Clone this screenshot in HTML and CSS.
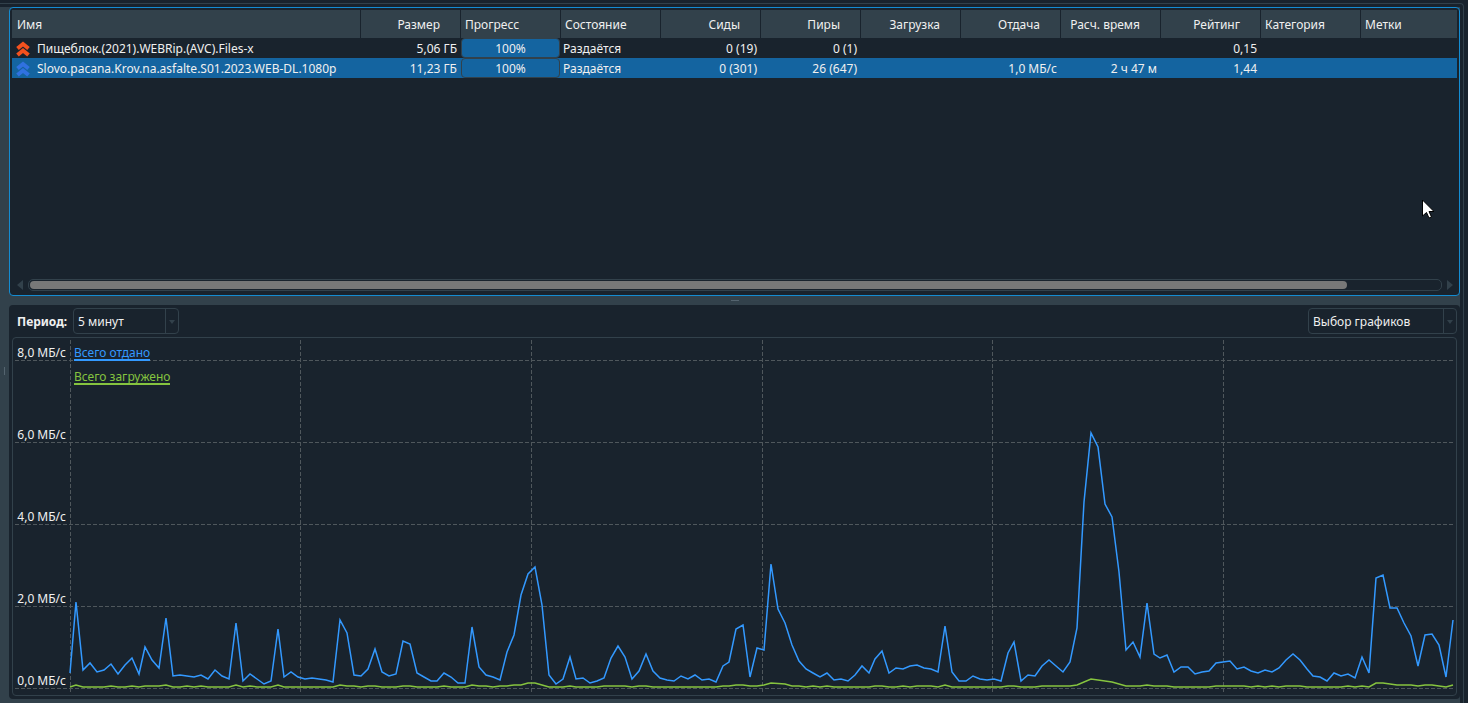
FILE: index.html
```html
<!DOCTYPE html>
<html lang="ru">
<head>
    <meta charset="UTF-8">
    <meta name="viewport" content="width=device-width, initial-scale=1.0">
    <title>Торренты</title>
    <link rel="stylesheet" href="styles.css">
</head>
<body>
    <div class="window">
        <div class="side-handle"></div>
        <div class="main">
            <section class="torrents">
                <table>
                    <colgroup>
                        <col class="col-name">
                        <col class="col" span="10">
                        <col>
                    </colgroup>
                    <thead>
                        <tr>
                            <th>Имя</th>
                            <th class="num">Размер</th>
                            <th>Прогресс</th>
                            <th>Состояние</th>
                            <th class="num">Сиды</th>
                            <th class="num">Пиры</th>
                            <th class="num">Загрузка</th>
                            <th class="num">Отдача</th>
                            <th class="num">Расч. время</th>
                            <th class="num">Рейтинг</th>
                            <th>Категория</th>
                            <th>Метки</th>
                        </tr>
                    </thead>
                    <tbody>
                        <tr>
                            <td>
                                <div class="name">
                                    <svg class="icon icon-orange" viewBox="0 0 14 14"><path d="M1.500 6.500 7 2l5.500 4.500M1.500 13 7 8.500l5.500 4.500"/></svg>
                                    <span>Пищеблок.(2021).WEBRip.(AVC).Files-x</span>
                                </div>
                            </td>
                            <td class="num">5,06 ГБ</td>
                            <td class="progress"><div class="bar">100%</div></td>
                            <td>Раздаётся</td>
                            <td class="num">0 (19)</td>
                            <td class="num">0 (1)</td>
                            <td class="num"></td>
                            <td class="num"></td>
                            <td class="num"></td>
                            <td class="num">0,15</td>
                            <td></td>
                            <td></td>
                        </tr>
                        <tr class="selected">
                            <td>
                                <div class="name">
                                    <svg class="icon icon-blue" viewBox="0 0 14 14"><path d="M1.500 6.500 7 2l5.500 4.500M1.500 13 7 8.500l5.500 4.500"/></svg>
                                    <span>Slovo.pacana.Krov.na.asfalte.S01.2023.WEB-DL.1080p</span>
                                </div>
                            </td>
                            <td class="num">11,23 ГБ</td>
                            <td class="progress"><div class="bar">100%</div></td>
                            <td>Раздаётся</td>
                            <td class="num">0 (301)</td>
                            <td class="num">26 (647)</td>
                            <td class="num"></td>
                            <td class="num">1,0 МБ/с</td>
                            <td class="num">2 ч 47 м</td>
                            <td class="num">1,44</td>
                            <td></td>
                            <td></td>
                        </tr>
                    </tbody>
                </table>
                <div class="scrollbar">
                    <svg class="arrow" viewBox="0 0 6 10"><path d="M6 0v10L0 5z"/></svg>
                    <div class="track"><div class="thumb"></div></div>
                    <svg class="arrow" viewBox="0 0 6 10"><path d="M0 0v10l6-5z"/></svg>
                </div>
            </section>

            <div class="splitter"></div>

            <section class="speed">
                <div class="toolbar">
                    <label for="period">Период:</label>
                    <span class="combo combo-period">
                        <select id="period">
                            <option>5 минут</option>
                        </select>
                    </span>
                    <span class="combo combo-graphs">
                        <select id="graphs" aria-label="Выбор графиков">
                            <option>Выбор графиков</option>
                        </select>
                    </span>
                </div>
                <div class="chart">
                    <svg class="plot" viewBox="13 338 1443 357" preserveAspectRatio="none">
                        <g class="grid">
                            <path d="M15 360.500H1453M15 442.500H1453M15 524.500H1453M15 606.500H1453M15 688.500H1453"/>
                            <path d="M70.500 340V692M300.500 340V692M531.500 340V692M762.500 340V692M992.500 340V692M1223.500 340V692"/>
                        </g>
                        <polyline class="line upload" points="70,673 76,602 83,670 90,663 97,672 104,670 111,664 118,674 125,665 132,658 139,674 145,647 152,660 159,668 166,618 173,676 180,675 187,676 194,677 201,675 208,679 215,670 222,676 229,679 236,623 243,681 250,674 257,679 264,684 271,681 278,629 284,677 291,672 298,677 305,679 312,678 319,679 326,680 333,682 340,620 347,633 354,675 361,676 368,669 375,649 382,672 389,676 396,674 403,641 410,644 417,673 424,677 431,681 437,681 444,673 451,677 458,683 465,683 472,627 479,667 486,675 493,677 500,680 507,652 514,635 521,595 528,574 535,567 542,605 549,675 556,684 563,679 570,657 576,679 583,678 590,683 597,681 604,678 611,658 618,646 625,657 632,679 639,671 646,654 653,671 660,678 667,680 674,681 681,676 688,679 695,675 702,680 709,679 716,682 723,666 729,662 736,629 743,625 750,677 757,648 764,650 771,564 778,609 785,623 792,645 799,661 806,669 813,673 820,677 827,673 834,680 841,679 848,681 855,675 862,666 869,673 875,659 882,651 889,673 896,668 903,669 910,666 917,665 924,668 931,669 938,672 945,626 952,672 959,681 966,681 973,676 980,679 987,680 994,679 1001,681 1008,653 1014,642 1021,681 1028,675 1035,676 1042,666 1049,660 1056,666 1063,672 1070,662 1077,628 1084,502 1091,433 1098,447 1105,504 1112,517 1119,572 1126,650 1133,642 1140,657 1147,603 1154,654 1160,658 1167,655 1174,672 1181,667 1188,667 1195,674 1202,672 1209,671 1216,663 1223,662 1230,661 1237,669 1244,667 1251,671 1258,673 1265,670 1272,672 1279,668 1286,660 1293,654 1300,660 1307,669 1313,676 1320,677 1327,681 1334,673 1341,676 1348,674 1355,678 1362,657 1369,673 1376,578 1383,575 1390,608 1397,608 1404,623 1411,636 1418,666 1425,635 1432,634 1439,645 1446,677 1453,620"/>
                        <polyline class="line download" points="70,687 76,685 83,687 104,687 111,686 118,687 125,687 132,686 139,687 145,686 159,686 166,685 173,687 180,687 187,686 194,687 201,686 208,687 229,687 236,685 243,687 250,686 257,687 271,687 278,685 284,687 333,687 340,685 347,686 354,686 361,687 368,686 375,686 382,687 396,687 403,686 410,686 417,687 437,687 444,686 451,687 465,687 472,685 479,686 486,686 493,687 500,686 507,686 514,685 521,685 528,683 535,683 542,685 549,687 563,687 570,686 576,687 597,687 604,686 625,686 632,687 639,686 646,686 653,687 716,687 723,686 729,686 736,685 743,685 750,686 757,686 764,685 771,683 785,684 792,686 799,686 806,687 813,686 820,687 827,686 834,687 869,687 875,686 882,686 889,687 896,687 903,686 910,687 917,686 931,686 938,687 945,685 952,687 1001,687 1008,686 1014,686 1021,687 1035,687 1042,686 1070,686 1077,685 1091,679 1112,682 1126,686 1140,686 1147,685 1154,686 1167,686 1174,687 1209,687 1216,686 1244,686 1251,687 1258,686 1265,687 1272,686 1279,687 1286,686 1300,686 1307,687 1341,687 1348,686 1355,687 1362,686 1369,687 1376,683 1383,683 1397,685 1411,685 1418,686 1425,685 1432,685 1446,687 1453,685"/>
                    </svg>
                    <div class="scale">
                        <span>8,0 МБ/с</span>
                        <span>6,0 МБ/с</span>
                        <span>4,0 МБ/с</span>
                        <span>2,0 МБ/с</span>
                        <span>0,0 МБ/с</span>
                    </div>
                    <div class="legend">
                        <span class="key-upload">Всего отдано</span>
                        <span class="key-download">Всего загружено</span>
                    </div>
                </div>
            </section>
        </div>
    </div>
    <svg class="cursor" viewBox="0 0 12 20"><path d="M.5 1v16l4-3.500 2.500 5.500 2.500-1-2.500-5.500h5z"/></svg>
</body>
</html>
```

FILE: styles.css
```css
* {
    box-sizing: border-box;
}
body {
    display: flex;
    margin: 0;
    min-height: 100vh;
    background: #19232d;
    color: #f0f0f0;
    font-family: "Noto Sans", "Open Sans", sans-serif;
    font-size: 12px;
    line-height: 16px;
}
.window {
    flex: 1;
    display: flex;
    min-width: 0;
    margin: 3px 4px 0 0;
    padding: 3px 3px 0 0;
    border-top: 1px solid #32414b;
    border-right: 1px solid #32414b;
    border-top-right-radius: 4px;
}
.side-handle {
    display: flex;
    align-items: center;
    width: 9px;
    background: #32414b;
}
.side-handle::after {
    content: "";
    width: 1px;
    height: 8px;
    margin: 32px 0 0 4px;
    background: #54646f;
}
.main {
    flex: 1;
    display: flex;
    flex-direction: column;
    min-width: 0;
    padding-bottom: 4px;
    background: #32414b;
}

/* Список торрентов */
.torrents {
    display: flex;
    flex-direction: column;
    justify-content: space-between;
    height: 289px;
    padding: 2px;
    background: #19232d;
    border: 1px solid #148cd2;
    border-radius: 4px;
}
table {
    width: 100%;
    table-layout: fixed;
    border-collapse: separate;
    border-spacing: 0;
}
.col-name {
    width: 349px;
}
.col {
    width: 100px;
}
th {
    height: 28px;
    padding: 2px 4px 0;
    background: #32414b;
    border-right: 1px solid #19232d;
    font-weight: normal;
    text-align: left;
    white-space: nowrap;
}
th:first-child {
    padding-left: 5px;
}
th:last-child {
    border-right: 0;
}
th.num {
    padding-right: 20px;
}
td {
    height: 20px;
    padding: 2px 4px 0 2px;
    white-space: nowrap;
}
.num {
    text-align: right;
}
.selected {
    background: #1464a0;
}
.name {
    display: flex;
    align-items: center;
    gap: 7px;
    padding-left: 2px;
}
.icon {
    width: 14px;
    height: 14px;
    overflow: visible;
    fill: none;
    stroke-width: 4;
}
.icon-orange {
    stroke: #f4511e;
}
.icon-blue {
    stroke: #3071e0;
}
td.progress {
    padding: 0 1px 0 0;
}
.bar {
    height: 20px;
    padding-top: 1px;
    background: #1464a0;
    border: 1px solid #32414b;
    border-radius: 4px;
    line-height: 18px;
    text-align: center;
}
.scrollbar {
    display: flex;
    align-items: center;
    gap: 5px;
    padding: 0 4px 2px 5px;
}
.arrow {
    width: 6px;
    height: 10px;
    fill: #32414b;
}
.track {
    flex: 1;
    height: 12px;
    padding: 1px;
    border: 1px solid #32414b;
    border-radius: 5px;
}
.thumb {
    width: 93.4%;
    height: 8px;
    background: #787878;
    border-radius: 4px;
}
.splitter {
    display: flex;
    align-items: center;
    justify-content: center;
    height: 9px;
}
.splitter::after {
    content: "";
    width: 8px;
    height: 1px;
    background: #54646f;
}

/* График скорости */
.speed {
    flex: 1;
    display: flex;
    flex-direction: column;
    gap: 3px;
    padding: 3px;
    background: #19232d;
    border-radius: 4px;
}
.toolbar {
    display: flex;
    align-items: center;
    padding-left: 5px;
}
.toolbar label {
    width: 56px;
    padding-top: 2px;
    font-weight: bold;
    white-space: nowrap;
}
.combo {
    position: relative;
    height: 26px;
    border: 1px solid #32414b;
    border-radius: 4px;
}
.combo-period {
    width: 106px;
}
.combo-graphs {
    width: 149px;
    margin-left: auto;
}
.combo select {
    width: 100%;
    height: 24px;
    padding: 2px 16px 0 4px;
    appearance: none;
    background: none;
    border: 0;
    color: inherit;
    font: inherit;
}
.combo::before {
    content: "";
    position: absolute;
    top: 0;
    right: 12px;
    bottom: 0;
    border-left: 1px solid #32414b;
}
.combo::after {
    content: "";
    position: absolute;
    top: 11px;
    right: 3px;
    border: 3px solid transparent;
    border-top: 4px solid #32414b;
    border-bottom: 0;
}
.chart {
    flex: 1;
    display: grid;
    grid-template-columns: 58px 1fr;
    grid-template-rows: 357px;
    border: 1px solid #32414b;
    border-radius: 4px;
}
.plot {
    grid-area: 1 / 1 / 2 / 3;
    width: 100%;
    height: 100%;
    fill: none;
}
.grid {
    stroke: #4f575c;
    stroke-width: 1;
    stroke-dasharray: 4 2;
}
.line {
    stroke-width: 1.5;
    vector-effect: non-scaling-stroke;
}
.upload {
    stroke: #3399ff;
}
.download {
    stroke: #86c43f;
}
.scale {
    grid-area: 1 / 1;
    display: grid;
    grid-template-rows: repeat(4, 82px) auto;
    align-content: start;
    padding: 7px 5px 0 0;
    text-align: right;
    white-space: nowrap;
}
.legend {
    grid-area: 1 / 2;
    display: flex;
    flex-direction: column;
    align-items: flex-start;
    gap: 8px;
    padding: 7px 3px;
}
.legend span {
    height: 16px;
    border-bottom: 2px solid;
    background: #19232d;
}
.key-upload {
    color: #3399ff;
}
.key-download {
    color: #86c43f;
}
.cursor {
    position: absolute;
    top: 199px;
    left: 1422px;
    width: 12px;
    height: 20px;
    fill: #fff;
    stroke: #000;
    stroke-width: 1;
}
```
